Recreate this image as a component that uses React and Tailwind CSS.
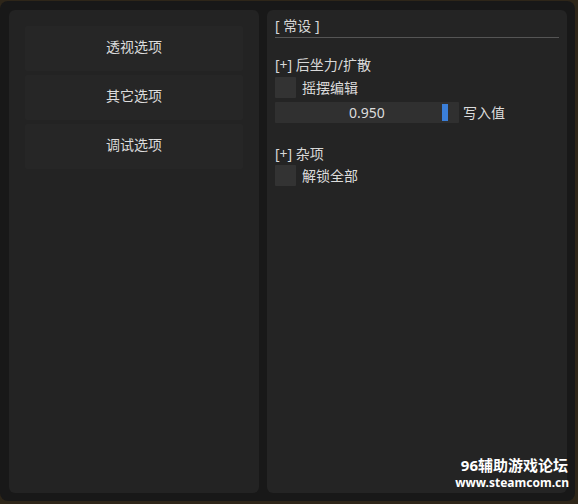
import React from "react";

const font = { fontFamily: '"Noto Sans", "Noto Sans CJK SC", sans-serif' };

function Checkbox({ label }) {
  return (
    <div className="flex items-center h-[21px]">
      <div className="w-[21px] h-[21px] bg-[#333333] rounded-[1px]" />
      <span className="ml-[6px] text-[14px] leading-[21px] text-[#dcdcdc]">{label}</span>
    </div>
  );
}

export default function App() {
  const tabs = ["透视选项", "其它选项", "调试选项"];

  return (
    <div className="w-[578px] h-[504px] bg-[#2e2619] relative overflow-hidden" style={font}>
      <div className="w-[575px] h-[500px] mt-[1px] rounded-[8px] bg-[#181818] pt-[9px] pl-[9px] flex gap-[8px]">
        {/* left menu */}
        <div className="w-[250px] h-[483px] rounded-[6px] bg-[#232323] px-[16px] pt-[16px] flex flex-col gap-[4px]">
          {tabs.map((t) => (
            <div
              key={t}
              className="h-[45px] bg-[#262626] rounded-[2px] flex justify-center pt-[11px] text-[14px] leading-[20px] text-[#dcdcdc]"
            >
              {t}
            </div>
          ))}
        </div>

        {/* right settings */}
        <div className="w-[300px] h-[483px] rounded-[6px] bg-[#242424] px-[8px] pt-[5px]">
          <div className="h-[22px] leading-[22px] text-[14px] text-[#d8d8d8] border-b border-[#555555] box-content">
            [ 常设 ]
          </div>

          <div className="mt-[17px] h-[20px] leading-[20px] text-[14px] text-[#d8d8d8]">[+] 后坐力/扩散</div>
          <div className="mt-[2px]">
            <Checkbox label="摇摆编辑" />
          </div>
          <div className="mt-[4px] flex items-center">
            <div className="w-[184px] h-[21px] bg-[#303030] rounded-[1px] relative flex justify-center items-center">
              <span className="text-[14px] leading-[21px] text-[#dcdcdc]">0.950</span>
              <div className="absolute left-[167px] top-[2px] w-[6px] h-[17px] bg-[#3b7fd9]" />
            </div>
            <span className="ml-[4px] text-[14px] leading-[21px] text-[#dcdcdc]">写入值</span>
          </div>

          <div className="mt-[21px] h-[20px] leading-[20px] text-[14px] text-[#d8d8d8]">[+] 杂项</div>
          <div className="mt-[1px]">
            <Checkbox label="解锁全部" />
          </div>
        </div>
      </div>

      {/* watermark */}
      <div className="absolute right-[10px] top-[457px] flex flex-col items-end text-white font-bold">
        <span className="text-[15px] leading-[17px]">96辅助游戏论坛</span>
        <span className="text-[12px] leading-[14px] mt-[2px] mr-[-1px]">www.steamcom.cn</span>
      </div>
    </div>
  );
}
